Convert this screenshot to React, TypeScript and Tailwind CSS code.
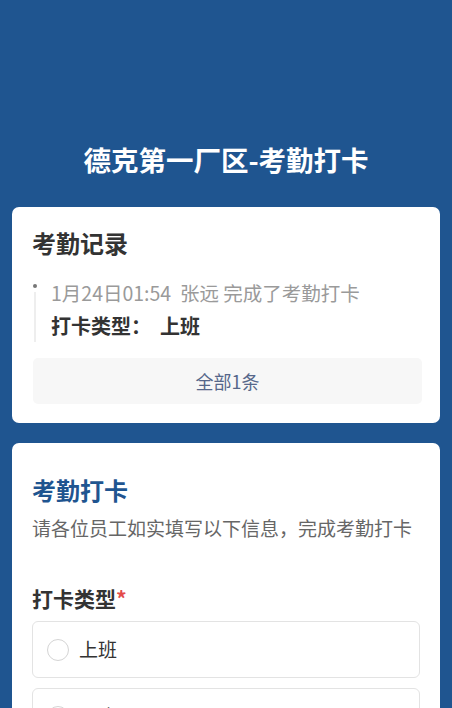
import React from "react";

const font = { fontFamily: '"Noto Sans CJK SC", "Noto Sans", sans-serif' };

export default function App() {
  return (
    <div style={font} className="min-h-[708px] w-full bg-[#1f5590] px-3 pt-[141px] pb-6">
      <h1 className="text-center text-[27.5px] leading-[36px] font-bold text-white">德克第一厂区-考勤打卡</h1>

      <div className="mt-[30px] rounded-[7px] bg-white px-5 pt-5 pb-[19px]">
        <h2 className="text-[24px] leading-[32px] font-bold text-[#333]">考勤记录</h2>
        <div className="relative mt-[17px] pl-[19px]">
          <div className="absolute left-[1px] top-[8px] h-[4px] w-[4px] rounded-full bg-[#777]"></div>
          <div className="absolute left-[2px] top-[16px] bottom-0 w-[1.5px] bg-[#eee]"></div>
          <div className="text-[19.5px] leading-[33px] text-[#9a9a9a] whitespace-nowrap">1月24日01:54&nbsp; 张远 完成了考勤打卡</div>
          <div className="text-[20px] leading-[33px] font-bold text-[#333] whitespace-nowrap">打卡类型：&nbsp; 上班</div>
        </div>
        <div className="ml-[1px] mr-[-2px] mt-4 flex h-[46px] items-center justify-center rounded-[5px] bg-[#f7f7f7] text-[18px] text-[#56678a]">全部1条</div>
      </div>

      <div className="mt-5 rounded-[7px] bg-white px-5 pt-[31px] pb-6">
        <h2 className="text-[24px] leading-[32px] font-bold text-[#1f5590]">考勤打卡</h2>
        <p className="mt-[7px] text-[19px] leading-[30px] text-[#666] whitespace-nowrap">请各位员工如实填写以下信息，完成考勤打卡</p>
        <div className="mt-10 text-[21px] leading-[30px] font-bold text-[#333]">
          打卡类型<span className="text-[#e34b4b]">*</span>
        </div>
        <div className="mt-2 flex flex-col gap-[10px]">
          {["上班", "下班"].map((t) => (
            <div key={t} className="flex h-[57px] items-center rounded-[6px] border-[1.5px] border-[#e3e3e3] pl-[14px]">
              <div className="h-[22px] w-[22px] rounded-full border-[1.5px] border-[#d4d4d4]"></div>
              <span className="ml-[10px] text-[19px] text-[#333]">{t}</span>
            </div>
          ))}
        </div>
      </div>
    </div>
  );
}
